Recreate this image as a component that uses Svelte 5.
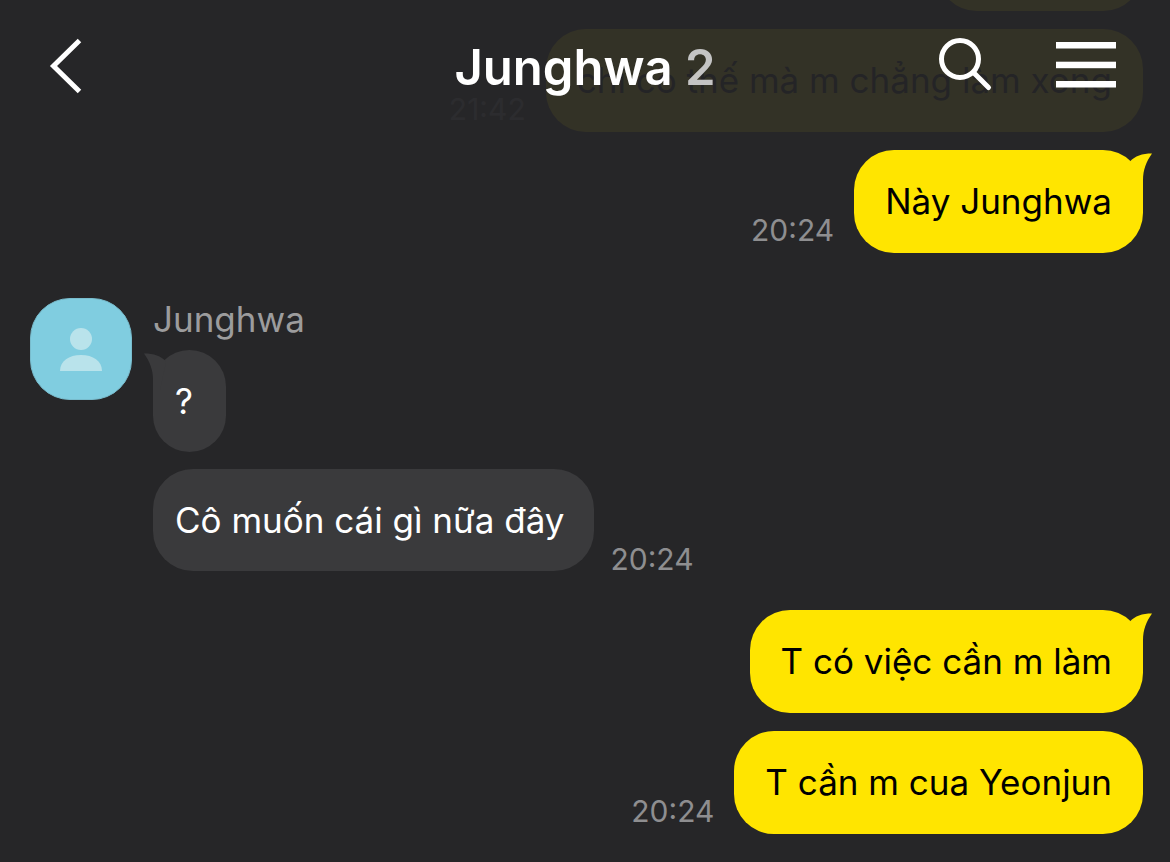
<script lang="ts">
  type Message = { text: string; time?: string; tail?: boolean };
  type Group = { from: "me" | "friend"; messages: Message[] };

  const friend = "Junghwa";
  const memberCount = 2;

  const groups: Group[] = [
    {
      from: "me",
      messages: [
        { text: "" },
        { text: "chỉ có thế mà m chẳng làm xong", time: "21:42" },
        { text: "Này Junghwa", time: "20:24", tail: true }
      ]
    },
    {
      from: "friend",
      messages: [
        { text: "?", tail: true },
        { text: "Cô muốn cái gì nữa đây", time: "20:24" }
      ]
    },
    {
      from: "me",
      messages: [
        { text: "T có việc cần m làm", tail: true },
        { text: "T cần m cua Yeonjun", time: "20:24" }
      ]
    }
  ];
</script>

<div class="chat">
  <header>
    <button class="back" aria-label="Back">
      <svg width="36" height="60" viewBox="0 0 36 60" fill="none" stroke="currentColor" stroke-width="5">
        <path d="M33.5 4.5L7.5 30l26 25.5"></path>
      </svg>
    </button>
    <h1>{friend} <span class="count">{memberCount}</span></h1>
    <div class="actions">
      <button aria-label="Search">
        <svg width="56" height="56" viewBox="0 0 56 56" fill="none" stroke="currentColor" stroke-width="5">
          <circle cx="22" cy="23" r="18.5"></circle>
          <line x1="35.5" y1="36.5" x2="50.5" y2="51.5" stroke-linecap="round"></line>
        </svg>
      </button>
      <button aria-label="Menu">
        <svg width="60" height="56" viewBox="0 0 60 56" fill="currentColor">
          <rect x="0" y="6" width="60" height="6.5"></rect>
          <rect x="0" y="25.7" width="60" height="6.5"></rect>
          <rect x="0" y="45" width="60" height="6.5"></rect>
        </svg>
      </button>
    </div>
  </header>

  <main>
    {#each groups as group}
      <section class="group {group.from}">
        {#if group.from === "friend"}
          <div class="avatar">
            <svg width="44" height="46" viewBox="0 0 44 46" fill="currentColor">
              <circle cx="22" cy="13" r="11"></circle>
              <path d="M1 45c0-10 9-16 21-16s21 6 21 16z"></path>
            </svg>
          </div>
        {/if}
        <div class="messages">
          {#if group.from === "friend"}
            <div class="name">{friend}</div>
          {/if}
          {#each group.messages as msg}
            <div class="row">
              <div class="bubble" class:empty={!msg.text}>
                {msg.text}
                {#if msg.tail}
                  <svg class="tail" width="22" height="38" viewBox="0 0 22 38" fill="currentColor">
                    <path d="M0 8.5C5 3 12 0.5 22 0.5C16 9 13 17 13 27L13 38L6 38Z"></path>
                  </svg>
                {/if}
              </div>
              {#if msg.time}
                <time>{msg.time}</time>
              {/if}
            </div>
          {/each}
        </div>
      </section>
    {/each}
  </main>
</div>

<style>
  :global(body) {
    margin: 0;
    background: #262628;
  }
  .chat {
    position: relative;
    height: 100vh;
    overflow: hidden;
    background: #262628;
    color: #fff;
    font-family: Inter, Roboto, sans-serif;
    font-size: 35px;
  }
  header {
    position: absolute;
    top: 0;
    left: 0;
    right: 0;
    z-index: 1;
    display: grid;
    grid-template-columns: 1fr auto 1fr;
    align-items: center;
    box-sizing: border-box;
    height: 140px;
    padding: 0 46px 8px;
    background: rgba(38, 38, 40, 0.94);
  }
  h1 {
    margin: 0;
    padding-top: 4px;
    font-size: 49px;
    line-height: 60px;
    font-weight: 600;
  }
  .count {
    color: #c4c4c4;
  }
  button {
    display: flex;
    padding: 0;
    border: none;
    background: transparent;
    color: #fff;
    cursor: pointer;
  }
  .back {
    justify-self: start;
  }
  .actions {
    display: flex;
    justify-content: flex-end;
    gap: 62px;
    padding: 0 8px 4px 0;
  }
  main {
    display: flex;
    flex-direction: column;
    justify-content: flex-end;
    box-sizing: border-box;
    height: 100%;
    padding: 0 27px 28px 30px;
  }
  .group {
    display: flex;
    flex-shrink: 0;
  }
  .messages {
    flex: 1;
    display: flex;
    flex-direction: column;
    gap: 18px;
  }
  .friend {
    gap: 21px;
    margin: 45px 0 39px;
  }
  .friend .messages {
    gap: 17px;
  }
  .avatar {
    display: flex;
    align-items: center;
    justify-content: center;
    box-sizing: border-box;
    width: 102px;
    height: 102px;
    border: 1px solid #79bccd;
    border-radius: 40px;
    background: #80cde0;
    color: #b9e3eb;
  }
  .name {
    margin-bottom: -17px;
    padding-bottom: 10px;
    color: #9c9c9d;
    line-height: 42px;
  }
  .row {
    display: flex;
    align-items: flex-end;
    gap: 16px;
  }
  .me .row {
    flex-direction: row-reverse;
    gap: 20px;
  }
  .bubble {
    position: relative;
    min-width: 21px;
    padding: 29px 30px 29px 22px;
    border-radius: 40px;
    background: #3a3a3c;
    line-height: 44px;
  }
  .me .bubble {
    padding: 30px 31px;
    background: #ffe500;
    color: #000;
    line-height: 43px;
  }
  .bubble.empty {
    width: 144px;
    height: 43px;
  }
  .tail {
    position: absolute;
    top: 3px;
    left: -9px;
    color: #3a3a3c;
    transform: scaleX(-1);
  }
  .me .tail {
    left: auto;
    right: -9px;
    color: #ffe500;
    transform: none;
  }
  time {
    color: #8e8e90;
    font-size: 30px;
    line-height: 24px;
  }
  .me time {
    padding-bottom: 11px;
  }
</style>
